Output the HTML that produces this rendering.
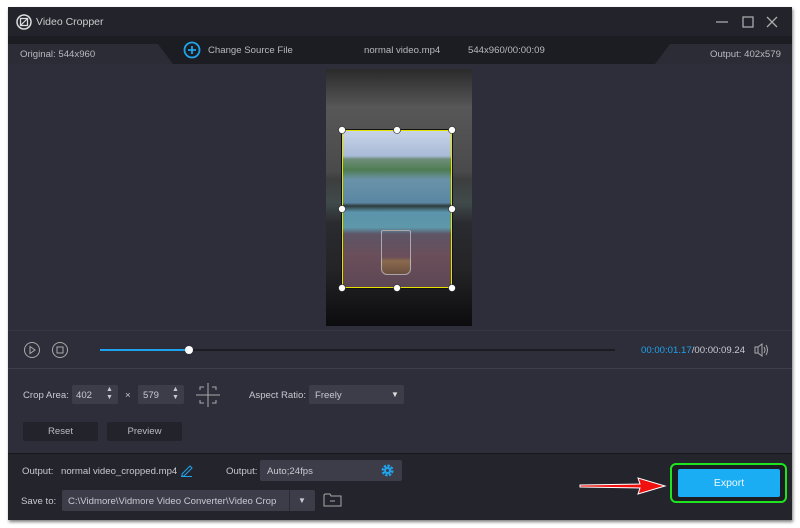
<!DOCTYPE html>
<html><head><style>
*{margin:0;padding:0;box-sizing:border-box}
body{width:800px;height:528px;background:#fff;position:relative;overflow:hidden;font-family:"Liberation Sans",sans-serif;font-size:9.6px;color:#c8c9d0}
.a{position:absolute}
.win{left:8px;top:7px;width:784px;height:513px;background:#2d2e39;box-shadow:1px 2px 3px rgba(0,0,0,.5)}
.inp{background:#3c3d49;border-radius:2px}
.btn{background:#22232b;border-radius:2px;text-align:center;line-height:19px;color:#b9bac2}
</style></head><body>
<div class="a win"></div>
<div class="a" style="left:8px;top:7px;width:784px;height:29px;background:#22232b"></div>
<svg class="a" style="left:16px;top:14px" width="16" height="16"><circle cx="8" cy="8" r="7" fill="none" stroke="#ddd" stroke-width="1.5"/><rect x="4.5" y="4.5" width="7" height="7" fill="none" stroke="#ddd" stroke-width="1.3"/><path d="M4.5 11.5L11.5 4.5" stroke="#ddd" stroke-width="1.2"/></svg>
<div class="a" style="left:36px;top:16px;font-size:10.5px;color:#ccc">Video Cropper</div>
<svg class="a" style="left:712px;top:14px" width="70" height="16"><path d="M4 8H16" stroke="#aaa" stroke-width="1.3"/><rect x="31" y="3" width="10" height="10" fill="none" stroke="#aaa" stroke-width="1.3"/><path d="M55 3L65 13M65 3L55 13" stroke="#aaa" stroke-width="1.3"/></svg>
<div class="a" style="left:8px;top:36px;width:784px;height:28px;background:#1c1d23"></div>
<svg class="a" style="left:8px;top:42px" width="784" height="22"><path d="M0 2H150L165 22H0Z" fill="#2b2c35"/><path d="M784 2H662L647 22H784Z" fill="#2b2c35"/></svg>
<div class="a" style="left:20px;top:49px;color:#b8b9c0">Original: 544x960</div>
<svg class="a" style="left:183px;top:41px" width="18" height="18"><circle cx="9" cy="9" r="7.5" fill="none" stroke="#1fa3ec" stroke-width="1.8"/><path d="M9 5V13M5 9H13" stroke="#1fa3ec" stroke-width="1.8"/></svg>
<div class="a" style="left:208px;top:45px;color:#b8b9c0">Change Source File</div>
<div class="a" style="left:364px;top:45px;color:#b8b9c0">normal video.mp4</div>
<div class="a" style="left:468px;top:45px;color:#b8b9c0">544x960/00:00:09</div>
<div class="a" style="left:710px;top:49px;color:#b8b9c0">Output: 402x579</div>
<!-- video -->
<div class="a" style="left:326px;top:69px;width:146px;height:257px;background:linear-gradient(#2a2a2a 0,#575757 15%,#4a4a4a 40%,#3e3e3e 43%,#404a4a 52%,#2a2b30 60%,#242426 78%,#0c0c0e 100%)"></div>
<div class="a" style="left:342px;top:130px;width:110px;height:158px;background:linear-gradient(#c8d3e6 0,#a9bbd8 16%,#6e8e7a 18%,#4f7c52 25%,#6a93a8 31%,#5a86a3 46%,#2e3b3c 48%,#5b94ab 52%,#5e96aa 62%,#5d5566 66%,#6a4f5a 80%,#5d4654 100%);border:1.5px solid #e5e200;box-shadow:0 0 0 1px #111"></div>
<div class="a" style="left:381px;top:230px;width:30px;height:45px;border:1.5px solid rgba(220,225,235,.6);border-radius:2px 2px 6px 6px;background:linear-gradient(transparent 60%,#8a6a4e 70%,#6b5040)"></div>
<svg class="a" style="left:336px;top:124px" width="124" height="172"><g fill="#fff" stroke="#222" stroke-width=".6"><circle cx="6" cy="6" r="3.5"/><circle cx="61" cy="6" r="3.5"/><circle cx="116" cy="6" r="3.5"/><circle cx="6" cy="85" r="3.5"/><circle cx="116" cy="85" r="3.5"/><circle cx="6" cy="164" r="3.5"/><circle cx="61" cy="164" r="3.5"/><circle cx="116" cy="164" r="3.5"/></g></svg>
<!-- controls -->
<div class="a" style="left:8px;top:330px;width:784px;height:1px;background:#363742"></div>
<svg class="a" style="left:22px;top:340px" width="60" height="20"><circle cx="10" cy="10" r="7.5" fill="none" stroke="#aaa"/><path d="M8 6.5L13 10L8 13.5Z" fill="none" stroke="#aaa"/><circle cx="38" cy="10" r="7.5" fill="none" stroke="#aaa"/><rect x="35" y="7" width="6" height="6" fill="none" stroke="#aaa"/></svg>
<div class="a" style="left:100px;top:349px;width:515px;height:2px;background:#1c1d23"></div>
<div class="a" style="left:100px;top:349px;width:89px;height:2px;background:#1fa3ec"></div>
<div class="a" style="left:185px;top:346px;width:8px;height:8px;border-radius:50%;background:#fff"></div>
<div class="a" style="left:641px;top:345px"><span style="color:#1fa3ec">00:00:01.17</span>/00:00:09.24</div>
<svg class="a" style="left:754px;top:343px" width="16" height="14"><rect x="1" y="4" width="3" height="6" fill="none" stroke="#aaa"/><path d="M4 4L8 1V13L4 10M10 4Q12 7 10 10M12 2Q15 7 12 12" fill="none" stroke="#aaa"/></svg>
<div class="a" style="left:8px;top:368px;width:784px;height:1px;background:#3d3e4a"></div>
<div class="a" style="left:23px;top:390px">Crop Area:</div>
<div class="a inp" style="left:72px;top:385px;width:46px;height:19px"><span class="a" style="left:4px;top:5px">402</span><span class="a" style="left:34px;top:1px;font-size:7px;line-height:8px">▲<br>▼</span></div>
<div class="a" style="left:125px;top:390px">×</div>
<div class="a inp" style="left:138px;top:385px;width:46px;height:19px"><span class="a" style="left:5px;top:5px">579</span><span class="a" style="left:34px;top:1px;font-size:7px;line-height:8px">▲<br>▼</span></div>
<svg class="a" style="left:195px;top:382px" width="26" height="26"><path d="M13 1V25M1 13H25M5 8V5H9M17 5H21V8M5 18V21H9M17 21H21V18" fill="none" stroke="#aaa"/></svg>
<div class="a" style="left:249px;top:390px">Aspect Ratio:</div>
<div class="a inp" style="left:309px;top:385px;width:95px;height:19px"><span class="a" style="left:6px;top:5px">Freely</span><span class="a" style="left:82px;top:5px;font-size:8px;color:#ddd">▼</span></div>
<div class="a btn" style="left:23px;top:422px;width:75px;height:19px">Reset</div>
<div class="a btn" style="left:107px;top:422px;width:75px;height:19px">Preview</div>
<!-- bottom -->
<div class="a" style="left:8px;top:453px;width:784px;height:67px;background:#23242c;border-top:1px solid #17181d"></div>
<div class="a" style="left:22px;top:466px">Output:</div>
<div class="a" style="left:61px;top:466px">normal video_cropped.mp4</div>
<svg class="a" style="left:180px;top:463px" width="13" height="14"><path d="M2 11L10 3L12 5L4 13H2Z" fill="none" stroke="#1fa3ec"/><path d="M1 13.5H12" stroke="#1fa3ec"/></svg>
<div class="a" style="left:226px;top:466px">Output:</div>
<div class="a inp" style="left:260px;top:460px;width:142px;height:21px"><span class="a" style="left:7px;top:6px">Auto;24fps</span>
<svg class="a" style="left:120px;top:3px" width="15" height="15"><circle cx="7.5" cy="7.5" r="4.5" fill="none" stroke="#1fa3ec" stroke-width="3" stroke-dasharray="2.2 1.3"/><circle cx="7.5" cy="7.5" r="3.5" fill="#1fa3ec"/><circle cx="7.5" cy="7.5" r="1.5" fill="#3c3d49"/></svg></div>
<div class="a" style="left:21px;top:496px">Save to:</div>
<div class="a inp" style="left:62px;top:490px;width:253px;height:21px"><span class="a" style="left:6px;top:6px">C:\Vidmore\Vidmore Video Converter\Video Crop</span><span class="a" style="left:227px;top:0;width:1px;height:21px;background:#2a2b33"></span><span class="a" style="left:236px;top:6px;font-size:8px">▼</span></div>
<svg class="a" style="left:323px;top:492px" width="19" height="16"><path d="M1 3V14H18V4H8L7 2H2Z" fill="none" stroke="#aaa"/><path d="M7 9H12" stroke="#aaa"/></svg>
<div class="a" style="left:670px;top:463px;width:117px;height:40px;border:2.5px solid #1ee41e;border-radius:6px;background:#1c1d23"></div>
<div class="a" style="left:678px;top:469px;width:102px;height:28px;background:#1aadf4;border-radius:2px;color:#f0f8ff;text-align:center;line-height:28px;font-size:10.5px">Export</div>
<svg class="a" style="left:578px;top:476px" width="90" height="20"><path d="M2 9L62 8L60 2L87 10L60 18L62 12L2 11Z" fill="#f01010" stroke="#fff" stroke-width="1"/></svg>
</body></html>
